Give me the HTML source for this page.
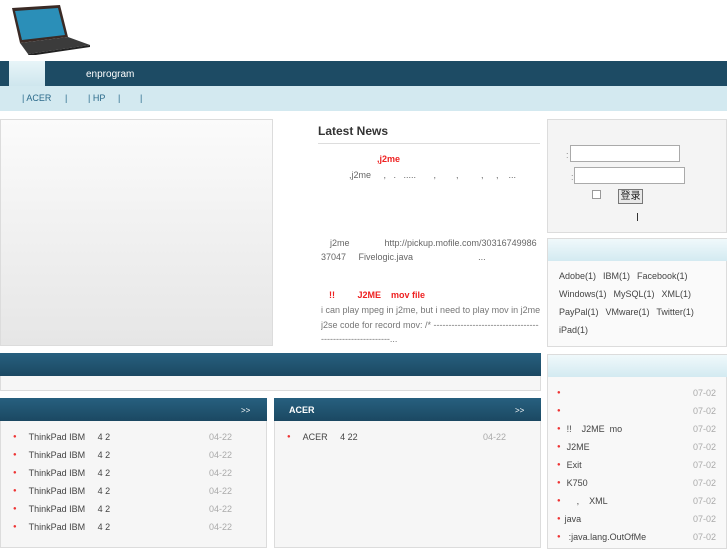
<!DOCTYPE html>
<html><head><meta charset="utf-8"><style>
*{margin:0;padding:0;box-sizing:border-box}
body{width:727px;height:545px;overflow:hidden;background:#fff;font-family:"Liberation Sans","Noto Sans CJK SC",sans-serif;font-size:9px;color:#444;position:relative}
.a{position:absolute}
.box{position:absolute;border:1px solid #dcdcdc;background:#f6f6f6}
.dark{position:absolute;background:linear-gradient(#27607f,#1b4862);}
.lt{position:absolute;background:linear-gradient(#f0f9fb,#d3eaf1)}
.row{position:absolute;font-size:9px;color:#444}
.dot{color:#e33;margin-right:10px;font-size:6px;vertical-align:2px}
.dt{position:absolute;color:#aaa}
.sn{position:absolute;top:93px;color:#2b6a8b;font-size:9px}
</style></head><body>
<svg class="a" style="left:10px;top:5px" width="82" height="50" viewBox="0 0 82 50">
<polygon points="2,3 50,0 58,32 10,38" fill="#3a2a25"/>
<polygon points="5,6 48,3 55,30 12,35" fill="#2b8fb8"/>
<polygon points="10,38 58,32 80,40 18,49" fill="#3b3b3b"/>
<polygon points="18,49 80,40 80,42 19,51" fill="#222"/>
</svg>
<div class="a" style="left:0;top:61px;width:727px;height:25px;background:#1d4b64"></div>
<div class="a" style="left:9px;top:61px;width:36px;height:25px;background:linear-gradient(#e8f5f8,#cfe6ee)"></div>
<div class="a" style="left:86px;top:69px;color:#fff;font-size:10px">enprogram</div>
<div class="a" style="left:0;top:86px;width:727px;height:25px;background:#d3e9f0"></div>
<div class="sn" style="left:22px">| ACER</div><div class="sn" style="left:65px">|</div>
<div class="sn" style="left:88px">| HP</div><div class="sn" style="left:118px">|</div><div class="sn" style="left:140px">|</div>

<div class="box" style="left:0;top:119px;width:273px;height:227px;background:linear-gradient(#fbfbfb,#e6e6e6)"></div>

<div class="a" style="left:318px;top:124px;font-size:12px;font-weight:bold;color:#333">Latest News</div>
<div class="a" style="left:318px;top:143px;width:222px;height:1px;background:#ddd"></div>
<div class="a" style="left:377px;top:154px;color:#e22;font-weight:bold">,j2me</div>
<div class="a" style="left:349px;top:170px;color:#666;white-space:pre;width:170px;overflow:hidden">,j2me     ,   .   .....       ,        ,         ,     ,    ...</div>
<div class="a" style="left:330px;top:238px;color:#666;white-space:pre">j2me              http://pickup.mofile.com/30316749986</div>
<div class="a" style="left:321px;top:252px;color:#666;white-space:pre">37047     Fivelogic.java                          ...</div>
<div class="a" style="left:329px;top:290px;color:#e22;font-weight:bold;white-space:pre">!!         J2ME    mov file</div>
<div class="a" style="left:321px;top:305px;color:#777">i can play mpeg in j2me, but i need to play mov in j2me</div>
<div class="a" style="left:321px;top:320px;color:#777;white-space:nowrap;overflow:hidden;width:218px">j2se code for record mov: /* ------------------------------------------</div>
<div class="a" style="left:321px;top:334px;color:#777">-----------------------...</div>

<div class="box" style="left:547px;top:119px;width:180px;height:114px;background:#f4f4f4"></div>
<div class="a" style="left:566px;top:150px;color:#888">:</div>
<div class="a" style="left:570px;top:145px;width:110px;height:17px;border:1px solid #aaa;background:#fff"></div>
<div class="a" style="left:571px;top:172px;color:#888">:</div>
<div class="a" style="left:574px;top:167px;width:111px;height:17px;border:1px solid #aaa;background:#fff"></div>
<div class="a" style="left:592px;top:190px;width:9px;height:9px;border:1px solid #999;background:#fff"></div>
<div class="a" style="left:618px;top:189px;width:25px;height:15px;border:1px solid #777;background:#e8e8e8;font-size:10px;text-align:center;line-height:13px;color:#222">登录</div>
<div class="a" style="left:637px;top:213px;width:1px;height:8px;background:#333"></div>

<div class="box" style="left:547px;top:238px;width:180px;height:109px;background:#fafafa"></div>
<div class="lt" style="left:548px;top:239px;width:179px;height:22px"></div>
<div class="a" style="left:559px;top:267px;color:#444;line-height:18px;width:165px;word-spacing:1px">Adobe(1)&nbsp; IBM(1)&nbsp; Facebook(1)<br>Windows(1)&nbsp; MySQL(1)&nbsp; XML(1)<br>PayPal(1)&nbsp; VMware(1)&nbsp; Twitter(1)<br>iPad(1)</div>

<div class="box" style="left:0;top:353px;width:541px;height:38px;background:#f6f6f6"></div>
<div class="dark" style="left:0;top:353px;width:541px;height:23px"></div>

<div class="box" style="left:0;top:398px;width:267px;height:150px"></div>
<div class="dark" style="left:0;top:398px;width:267px;height:23px"></div>
<div class="a" style="left:241px;top:406px;color:#fff;font-size:8px">&gt;&gt;</div>
<div class="box" style="left:274px;top:398px;width:267px;height:150px"></div>
<div class="dark" style="left:274px;top:398px;width:267px;height:23px"></div>
<div class="a" style="left:289px;top:405px;color:#fff;font-weight:bold">ACER</div>
<div class="a" style="left:515px;top:406px;color:#fff;font-size:8px">&gt;&gt;</div>

<div class="row" style="left:13px;top:432px"><span class="dot">●</span><span style="margin-left:2px">ThinkPad IBM&nbsp;&nbsp;&nbsp;&nbsp; 4 2</span></div><div class="dt" style="left:209px;top:432px">04-22</div>
<div class="row" style="left:13px;top:450px"><span class="dot">●</span><span style="margin-left:2px">ThinkPad IBM&nbsp;&nbsp;&nbsp;&nbsp; 4 2</span></div><div class="dt" style="left:209px;top:450px">04-22</div>
<div class="row" style="left:13px;top:468px"><span class="dot">●</span><span style="margin-left:2px">ThinkPad IBM&nbsp;&nbsp;&nbsp;&nbsp; 4 2</span></div><div class="dt" style="left:209px;top:468px">04-22</div>
<div class="row" style="left:13px;top:486px"><span class="dot">●</span><span style="margin-left:2px">ThinkPad IBM&nbsp;&nbsp;&nbsp;&nbsp; 4 2</span></div><div class="dt" style="left:209px;top:486px">04-22</div>
<div class="row" style="left:13px;top:504px"><span class="dot">●</span><span style="margin-left:2px">ThinkPad IBM&nbsp;&nbsp;&nbsp;&nbsp; 4 2</span></div><div class="dt" style="left:209px;top:504px">04-22</div>
<div class="row" style="left:13px;top:522px"><span class="dot">●</span><span style="margin-left:2px">ThinkPad IBM&nbsp;&nbsp;&nbsp;&nbsp; 4 2</span></div><div class="dt" style="left:209px;top:522px">04-22</div>
<div class="row" style="left:287px;top:432px"><span class="dot">●</span><span style="margin-left:2px">ACER&nbsp;&nbsp;&nbsp;&nbsp; 4 22</span></div><div class="dt" style="left:483px;top:432px">04-22</div>

<div class="box" style="left:547px;top:354px;width:180px;height:195px;background:#f8f8f8"></div>
<div class="lt" style="left:548px;top:355px;width:179px;height:22px"></div>
<div class="row" style="left:557px;top:388px"><span class="dot">●</span></div><div class="dt" style="left:693px;top:388px">07-02</div>
<div class="row" style="left:557px;top:406px"><span class="dot">●</span></div><div class="dt" style="left:693px;top:406px">07-02</div>
<div class="row" style="left:557px;top:424px"><span class="dot" style="margin-right:6px">●</span>!!&nbsp;&nbsp;&nbsp; J2ME&nbsp; mo</div><div class="dt" style="left:693px;top:424px">07-02</div>
<div class="row" style="left:557px;top:442px"><span class="dot" style="margin-right:6px">●</span>J2ME</div><div class="dt" style="left:693px;top:442px">07-02</div>
<div class="row" style="left:557px;top:460px"><span class="dot" style="margin-right:6px">●</span>Exit</div><div class="dt" style="left:693px;top:460px">07-02</div>
<div class="row" style="left:557px;top:478px"><span class="dot" style="margin-right:6px">●</span>K750</div><div class="dt" style="left:693px;top:478px">07-02</div>
<div class="row" style="left:557px;top:496px"><span class="dot" style="margin-right:6px">●</span>&nbsp;&nbsp;&nbsp; ,&nbsp;&nbsp;&nbsp; XML</div><div class="dt" style="left:693px;top:496px">07-02</div>
<div class="row" style="left:557px;top:514px"><span class="dot" style="margin-right:4px">●</span>java</div><div class="dt" style="left:693px;top:514px">07-02</div>
<div class="row" style="left:557px;top:532px"><span class="dot" style="margin-right:8px">●</span>:java.lang.OutOfMe</div><div class="dt" style="left:693px;top:532px">07-02</div>
</body></html>
